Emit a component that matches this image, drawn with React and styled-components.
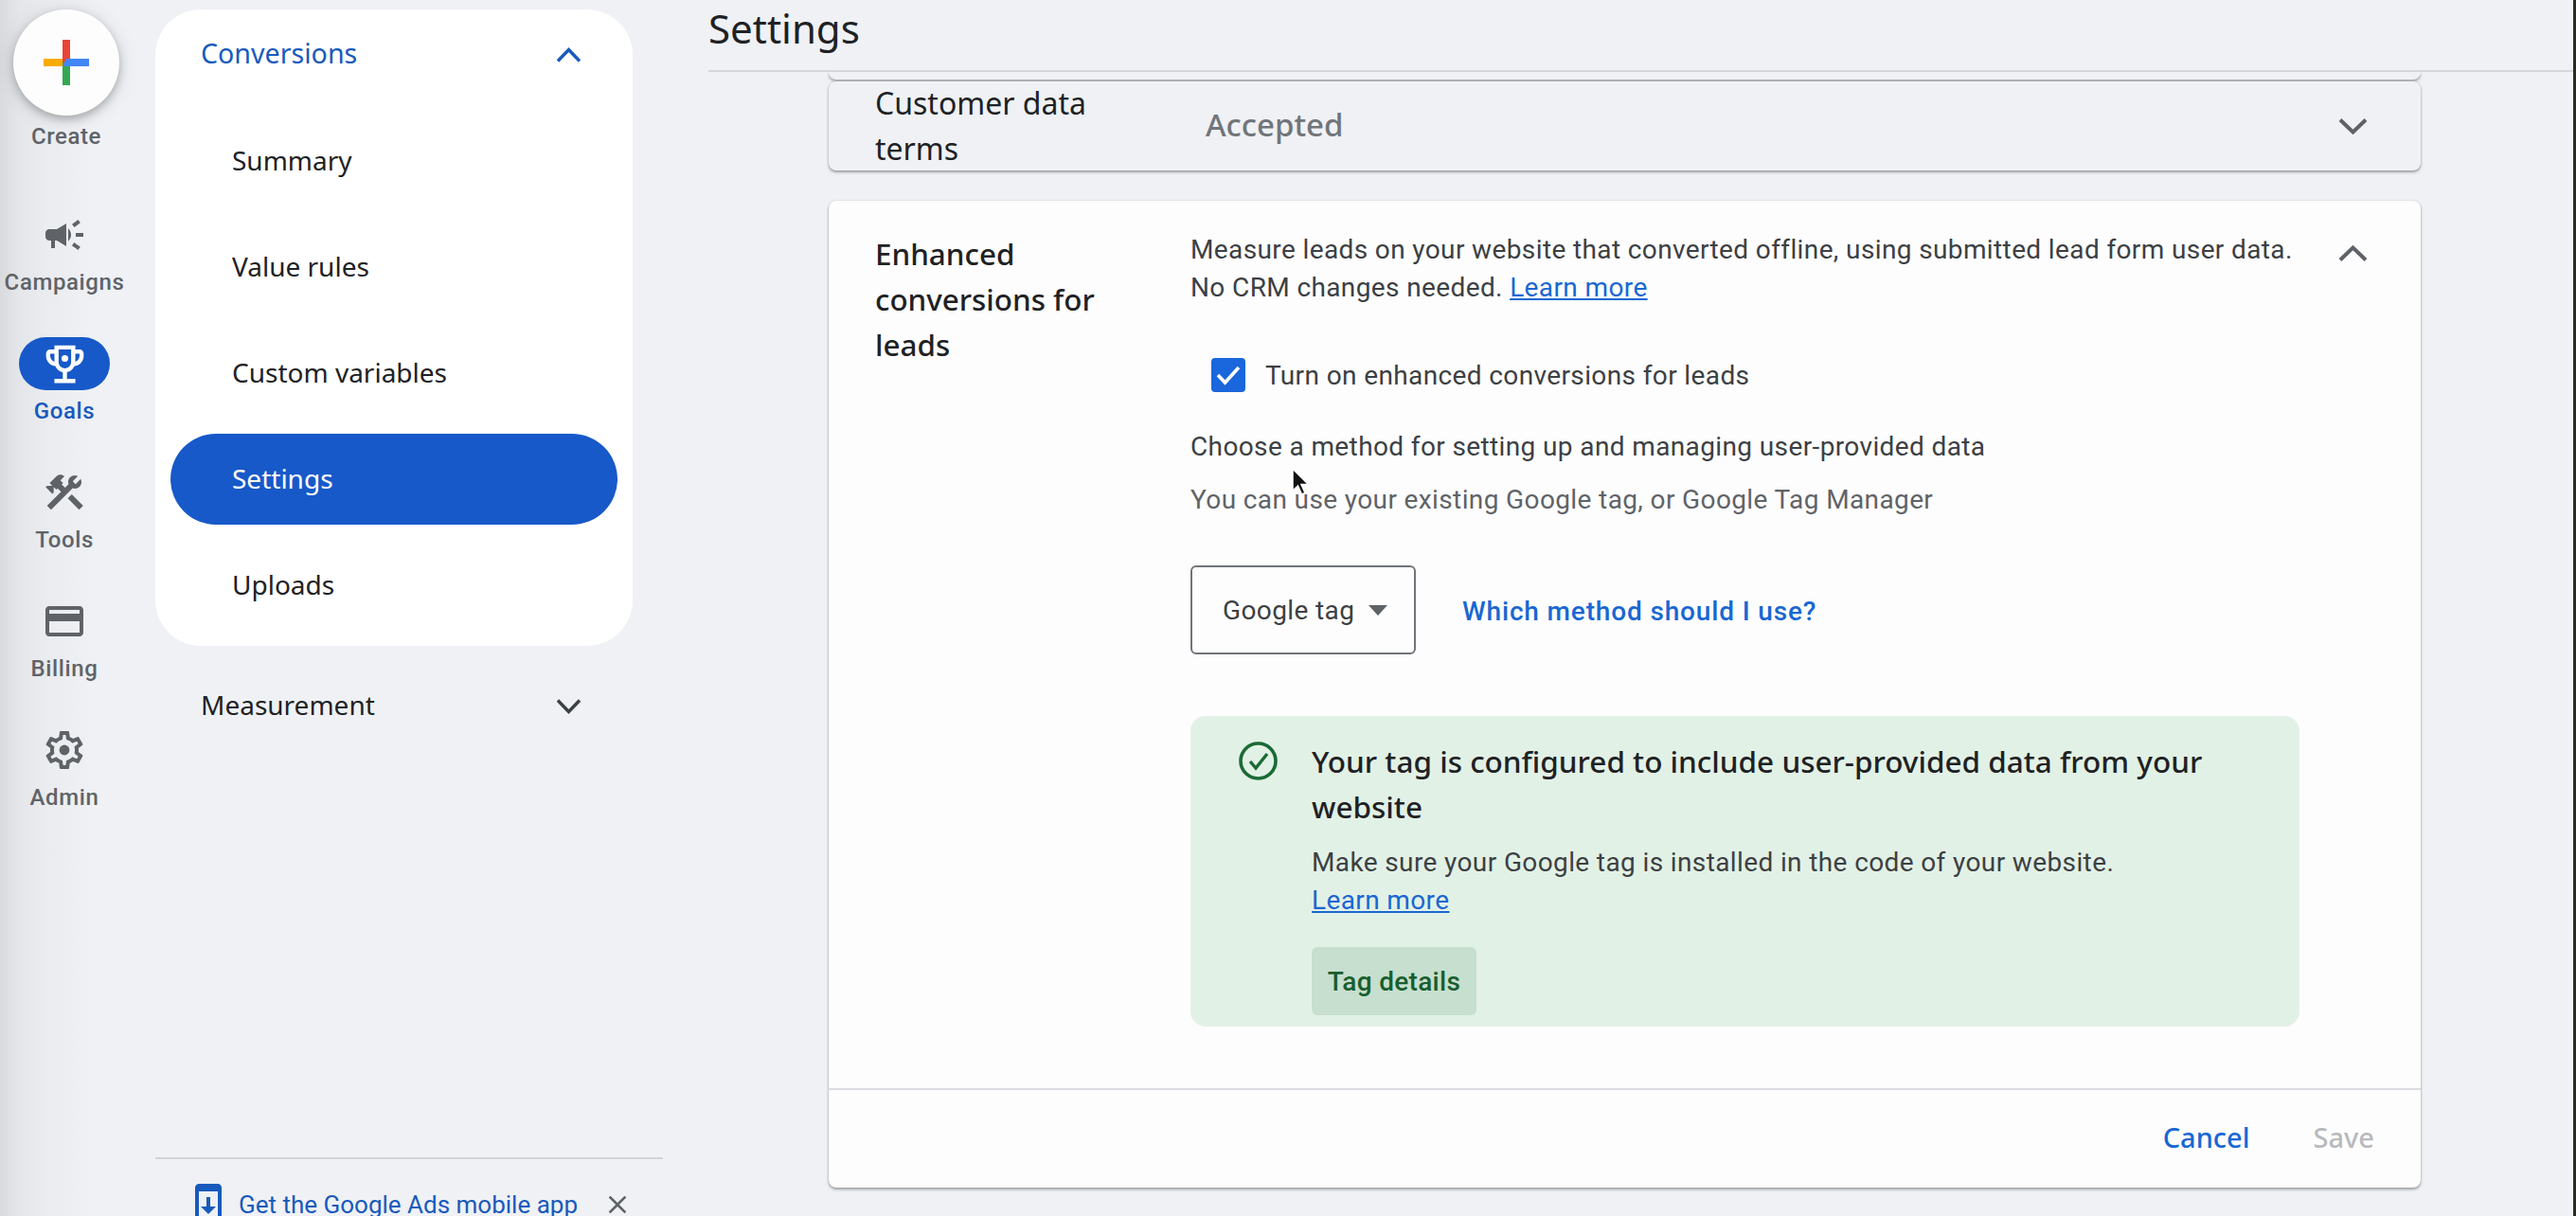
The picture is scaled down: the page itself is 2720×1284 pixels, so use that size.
import React from "react";
import styled, { createGlobalStyle } from "styled-components";

const DISPLAY = `"Noto Sans", Roboto, sans-serif`;
const BRAND = "#1759c9";

const Global = createGlobalStyle`
  html, body { margin: 0; padding: 0; background: #eff1f5; }
  * { box-sizing: border-box; }
  body { font-family: Roboto, "Noto Sans", sans-serif; color: #202124; }
`;

const Page = styled.div`
  position: relative;
  display: flex;
  width: 2720px;
  height: 1284px;
  overflow: hidden;
  border-right: 3px solid #2b2a20;
  background: linear-gradient(90deg, #d8dadd 0, #e4e6e9 20px, #eaecef 50px, #eff1f5 100px);
`;

const Rail = styled.nav`
  width: 164px;
  flex: none;
  display: flex;
  flex-direction: column;
  padding-top: 10px;
`;

const CreateButton = styled.div`
  width: 112px;
  height: 112px;
  margin-left: 14px;
  border-radius: 50%;
  background: #fdfdfd;
  box-shadow: 0 4px 10px rgba(60, 64, 67, 0.35), 0 2px 22px rgba(60, 64, 67, 0.12);
  display: flex;
  align-items: center;
  justify-content: center;
`;

const RailLabel = styled.div`
  height: 32px;
  line-height: 32px;
  margin-top: 6px;
  text-align: center;
  font-size: 24px;
  font-weight: 500;
  letter-spacing: 0.6px;
  color: ${(p) => (p.$active ? "#185abc" : "#5f6368")};
`;

const CreateBlock = styled.div`
  width: 140px;
  margin-bottom: 60px;
`;

const RailItem = styled.div`
  width: 136px;
  margin-bottom: 42px;
`;

const RailIcon = styled.div`
  width: 96px;
  height: 56px;
  margin: 0 auto;
  border-radius: 28px;
  display: flex;
  align-items: center;
  justify-content: center;
  background: ${(p) => (p.$active ? BRAND : "transparent")};
  color: ${(p) => (p.$active ? "#fff" : "#5f6368")};
`;

const NavColumn = styled.div`
  width: 536px;
  flex: none;
  display: flex;
  flex-direction: column;
  padding-top: 10px;
`;

const NavPanel = styled.div`
  width: 504px;
  background: #fff;
  border-radius: 48px;
  padding-bottom: 16px;
`;

const NavHeader = styled.div`
  width: 504px;
  height: 96px;
  display: flex;
  align-items: center;
  justify-content: space-between;
  padding: 0 54px 0 48px;
  font-family: ${DISPLAY};
  font-size: ${(p) => (p.$active ? 28.6 : 28)}px;
  line-height: 40px;
  color: ${(p) => (p.$active ? "#185abc" : "#202124")};
  margin-top: ${(p) => (p.$active ? 0 : "16px")};
`;

const NavHeaderText = styled.span`
  position: relative;
  top: -2px;
`;

const NavItem = styled.div`
  width: 472px;
  height: 96px;
  margin: 16px 0 0 16px;
  padding: 0 0 3px 65px;
  display: flex;
  align-items: center;
  border-radius: 48px;
  font-family: ${DISPLAY};
  font-size: 28px;
  line-height: 40px;
  color: ${(p) => (p.$active ? "#fff" : "#202124")};
  background: ${(p) => (p.$active ? BRAND : "transparent")};
`;

const NavFooter = styled.div`
  margin-top: auto;
  height: 62px;
  border-top: 2px solid #d0d2d6;
  padding: 24px 32px 0;
`;

const FooterRow = styled.div`
  display: flex;
  align-items: center;
  height: 48px;
  color: #185abc;
`;

const FooterText = styled.span`
  font-size: 26px;
  line-height: 24px;
  margin-left: 8px;
  flex: 1;
`;

const FooterClose = styled.span`
  display: flex;
  color: #5f6368;
`;

const Main = styled.main`
  flex: 1;
  min-width: 0;
  margin-left: 48px;
  display: flex;
  flex-direction: column;
`;

const PageHeader = styled.header`
  height: 76px;
  flex: none;
  border-bottom: 2px solid #d5d7da;
  font-family: ${DISPLAY};
  font-size: 42px;
  line-height: 60px;
  color: #202124;
`;

const Content = styled.div`
  padding-left: 127px;
  width: 1808px;
`;

const Sliver = styled.div`
  height: 8px;
  margin-bottom: 2px;
  border-radius: 0 0 8px 8px;
  background: #eff1f5;
  box-shadow: 0 2px 3px rgba(60, 64, 67, 0.45);
`;

const CollapsedCard = styled.section`
  height: 94px;
  display: flex;
  align-items: center;
  padding: 0 48px 0 49px;
  border-radius: 8px;
  background: #eff1f5;
  box-shadow: 0 2px 3px rgba(60, 64, 67, 0.45), 0 0 2px rgba(60, 64, 67, 0.2);
`;

const RowTitle = styled.div`
  width: 284px;
  flex: none;
  font-family: ${DISPLAY};
  font-size: ${(p) => (p.$strong ? 31.4 : 32)}px;
  line-height: 48px;
  font-weight: ${(p) => (p.$strong ? 500 : 400)};
  color: #202124;
  margin-right: ${(p) => p.$gap}px;
`;

const Accepted = styled.div`
  flex: 1;
  padding-bottom: 3px;
  font-family: ${DISPLAY};
  font-size: 33px;
  line-height: 44px;
  font-weight: 500;
  color: #70757a;
`;

const ChevronSlot = styled.div`
  width: 48px;
  height: 48px;
  flex: none;
  display: flex;
  align-items: center;
  justify-content: center;
  color: #5f6368;
  margin-top: ${(p) => p.$top || 0}px;
`;

const OpenCard = styled.section`
  margin-top: 32px;
  height: 1042px;
  border-radius: 8px;
  background: #fdfdfd;
  box-shadow: 0 2px 3px rgba(60, 64, 67, 0.45), 0 0 2px rgba(60, 64, 67, 0.2);
  display: flex;
  flex-direction: column;
`;

const CardBody = styled.div`
  flex: 1;
  display: flex;
  padding: 32px 48px 0 49px;
`;

const Column = styled.div`
  width: 1171px;
  flex: none;
  margin-right: 32px;
`;

const BodyText = styled.p`
  margin: ${(p) => p.$top || 0}px 0 0;
  font-size: 28px;
  line-height: 40px;
  letter-spacing: 0.38px;
  color: ${(p) => (p.$muted ? "#5f6368" : "#3c4043")};
`;

const TextLink = styled.a`
  color: #1967d2;
  text-decoration: underline;
`;

const CheckRow = styled.label`
  display: flex;
  align-items: center;
  gap: 21px;
  margin: 54px 0 0 22px;
  height: 36px;
  font-size: 28px;
  letter-spacing: 0.38px;
  color: #3c4043;
`;

const Checkbox = styled.span`
  width: 36px;
  height: 36px;
  border-radius: 4px;
  background: #1a66dc;
  display: flex;
  align-items: center;
  justify-content: center;
`;

const MethodRow = styled.div`
  display: flex;
  align-items: center;
  margin-top: 49px;
  gap: 49px;
`;

const Dropdown = styled.div`
  width: 238px;
  height: 94px;
  border: 2px solid #70757a;
  border-radius: 6px;
  padding-left: 32px;
  display: flex;
  align-items: center;
  gap: 15px;
  font-size: 28px;
  letter-spacing: 0.38px;
  color: #3c4043;
`;

const Caret = styled.span`
  width: 0;
  height: 0;
  border-left: 10px solid transparent;
  border-right: 10px solid transparent;
  border-top: 11px solid #5f6368;
`;

const ActionLink = styled.a`
  padding-top: 2px;
  font-size: 28px;
  letter-spacing: 0.85px;
  font-weight: 500;
  color: #1967d2;
`;

const Banner = styled.div`
  margin-top: 65px;
  height: 328px;
  border-radius: 16px;
  background: #e2f1e6;
  display: flex;
  padding: 24px 0 0 51px;
  gap: 36px;
`;

const BannerIcon = styled.div`
  margin-top: 3px;
  width: 41px;
  height: 41px;
  flex: none;
`;

const BannerTitle = styled.div`
  font-family: ${DISPLAY};
  font-size: 31.5px;
  line-height: 48px;
  font-weight: 500;
  color: #202124;
`;

const DetailsButton = styled.div`
  margin-top: 29px;
  width: 174px;
  height: 72px;
  border-radius: 6px;
  background: #c6dfcf;
  color: #185e2e;
  font-size: 28px;
  letter-spacing: 0.3px;
  font-weight: 500;
  display: flex;
  align-items: center;
  justify-content: center;
`;

const CardFooter = styled.div`
  height: 105px;
  flex: none;
  border-top: 2px solid #dadce0;
  display: flex;
  align-items: center;
  justify-content: flex-end;
  gap: 67px;
  padding: 0 49px 3px 0;
  font-family: ${DISPLAY};
  font-size: 29px;
  line-height: 40px;
  font-weight: 500;
`;

const FooterButton = styled.span`
  color: ${(p) => (p.$disabled ? "#b8babd" : "#1967d2")};
`;

const Pointer = styled.svg`
  position: absolute;
  left: 1363px;
  top: 493px;
`;

const Chevron = ({ up, w = 31, h = 17, color = "currentColor", weight = 4 }) => (
  <svg width={w} height={h} viewBox={`0 0 ${w} ${h}`} fill="none">
    <polyline
      points={up ? `2,${h - 1.5} ${w / 2},2.5 ${w - 2},${h - 1.5}` : `2,1.5 ${w / 2},${h - 2.5} ${w - 2},1.5`}
      stroke={color}
      strokeWidth={weight}
    />
  </svg>
);

const Mat = ({ size = 48, d, children }) => (
  <svg width={size} height={size} viewBox="0 0 24 24" fill="currentColor">
    {d && <path d={d} />}
    {children}
  </svg>
);

const icons = {
  campaign:
    "M18 11v2h4v-2h-4zm-2 6.61c.96.71 2.21 1.65 3.2 2.39.4-.53.8-1.07 1.2-1.6-.99-.74-2.24-1.68-3.2-2.4-.4.54-.8 1.08-1.2 1.61zM20.4 5.6c-.4-.53-.8-1.07-1.2-1.6-.99.74-2.24 1.68-3.2 2.4.4.53.8 1.07 1.2 1.6.96-.72 2.21-1.65 3.2-2.4zM4 9c-1.1 0-2 .9-2 2v2c0 1.1.9 2 2 2h1v4h2v-4h1l5 3V6L8 9H4zm11.5 3c0-1.33-.58-2.53-1.5-3.35v6.69c.92-.81 1.5-2.01 1.5-3.34z",
  trophy:
    "M19 5h-2V3H7v2H5c-1.1 0-2 .9-2 2v1c0 2.55 1.92 4.63 4.39 4.94.63 1.5 1.98 2.63 3.61 2.96V19H7v2h10v-2h-4v-3.1c1.63-.33 2.98-1.46 3.61-2.96C19.08 12.63 21 10.55 21 8V7c0-1.1-.9-2-2-2zM5 8V7h2v3.82C5.84 10.4 5 9.3 5 8zm7 6c-1.65 0-3-1.35-3-3V5h6v6c0 1.65-1.35 3-3 3zm7-6c0 1.3-.84 2.4-2 2.82V7h2v1z",
  tools:
    "M13.783 15.172l2.121-2.121 5.996 5.996-2.121 2.121zM17.5 10c1.93 0 3.5-1.57 3.5-3.5 0-.58-.16-1.12-.41-1.6l-2.7 2.7-1.49-1.49 2.7-2.7c-.48-.25-1.02-.41-1.6-.41C15.57 3 14 4.57 14 6.5c0 .41.08.8.21 1.16l-1.85 1.85-1.78-1.78.71-.71-1.41-1.41L12 3.49c-1.17-1.17-3.07-1.17-4.24 0L4.22 7.03l1.41 1.41H2.81l-.71.71 3.54 3.54.71-.71V9.15l1.41 1.41.71-.71 1.78 1.78-7.41 7.41 2.12 2.12L16.34 9.79c.36.13.75.21 1.16.21z",
  card:
    "M20 4H4c-1.11 0-1.99.89-1.99 2L2 18c0 1.11.89 2 2 2h16c1.11 0 2-.89 2-2V6c0-1.11-.89-2-2-2zm0 14H4v-6h16v6zm0-10H4V6h16v2z",
  gear:
    "M19.43 12.98c.04-.32.07-.64.07-.98 0-.34-.03-.66-.07-.98l2.11-1.65c.19-.15.24-.42.12-.64l-2-3.46c-.09-.16-.26-.25-.44-.25-.06 0-.12.01-.17.03l-2.49 1c-.52-.4-1.08-.73-1.69-.98l-.38-2.65C14.46 2.18 14.25 2 14 2h-4c-.25 0-.46.18-.49.42l-.38 2.65c-.61.25-1.17.59-1.69.98l-2.49-1c-.06-.02-.12-.03-.18-.03-.17 0-.34.09-.43.25l-2 3.46c-.13.22-.07.49.12.64l2.11 1.65c-.04.32-.07.65-.07.98 0 .33.03.66.07.98l-2.11 1.65c-.19.15-.24.42-.12.64l2 3.46c.09.16.26.25.44.25.06 0 .12-.01.17-.03l2.49-1c.52.4 1.08.73 1.69.98l.38 2.65c.03.24.24.42.49.42h4c.25 0 .46-.18.49-.42l.38-2.65c.61-.25 1.17-.59 1.69-.98l2.49 1c.06.02.12.03.18.03.17 0 .34-.09.43-.25l2-3.46c.12-.22.07-.49-.12-.64l-2.11-1.65zm-1.98-1.71c.04.31.05.52.05.73 0 .21-.02.43-.05.73l-.14 1.13.89.7 1.08.84-.7 1.21-1.27-.51-1.04-.42-.9.68c-.43.32-.84.56-1.25.73l-1.06.43-.16 1.13-.2 1.35h-1.4l-.19-1.35-.16-1.13-1.06-.43c-.43-.18-.83-.41-1.23-.71l-.91-.7-1.06.43-1.27.51-.7-1.21 1.08-.84.89-.7-.14-1.13c-.03-.31-.05-.54-.05-.74s.02-.43.05-.73l.14-1.13-.89-.7-1.08-.84.7-1.21 1.27.51 1.04.42.9-.68c.43-.32.84-.56 1.25-.73l1.06-.43.16-1.13.2-1.35h1.39l.19 1.35.16 1.13 1.06.43c.43.18.83.41 1.23.71l.91.7 1.06-.43 1.27-.51.7 1.21-1.07.85-.89.7.14 1.13z",
  phone:
    "M17 1.01L7 1c-1.1 0-2 .9-2 2v18c0 1.1.9 2 2 2h10c1.1 0 2-.9 2-2V3c0-1.1-.9-1.99-2-1.99zM17 19H7V5h10v14zm-1-6h-3V8h-2v5H8l4 4 4-4z",
  close:
    "M19 6.41L17.59 5 12 10.59 6.41 5 5 6.41 10.59 12 5 17.59 6.41 19 12 13.41 17.59 19 19 17.59 13.41 12z",
};

const railItems = [
  { label: "Campaigns", icon: <Mat d={icons.campaign} /> },
  {
    label: "Goals",
    active: true,
    icon: (
      <Mat size={53} d={icons.trophy}>
        <circle cx="12" cy="9.3" r="1.6" />
      </Mat>
    ),
  },
  { label: "Tools", icon: <Mat d={icons.tools} /> },
  { label: "Billing", icon: <Mat d={icons.card} /> },
  {
    label: "Admin",
    icon: (
      <Mat d={icons.gear}>
        <circle cx="12" cy="12" r="2.7" />
      </Mat>
    ),
  },
];

const navItems = ["Summary", "Value rules", "Custom variables", "Settings", "Uploads"];

export default function App() {
  return (
    <Page>
      <Global />
      <Rail>
        <CreateBlock>
          <CreateButton>
            <svg width="48" height="48" viewBox="0 0 48 48">
              <rect x="0" y="20" width="24" height="8" fill="#f9ab00" />
              <rect x="20" y="24" width="8" height="24" fill="#34a853" />
              <rect x="20" y="0" width="8" height="24" fill="#ea4335" />
              <polygon points="24,20 48,20 48,28 20,28" fill="#4285f4" />
            </svg>
          </CreateButton>
          <RailLabel>Create</RailLabel>
        </CreateBlock>
        {railItems.map((item) => (
          <RailItem key={item.label}>
            <RailIcon $active={item.active}>{item.icon}</RailIcon>
            <RailLabel $active={item.active}>{item.label}</RailLabel>
          </RailItem>
        ))}
      </Rail>

      <NavColumn>
        <NavPanel>
          <NavHeader $active>
            <NavHeaderText>Conversions</NavHeaderText>
            <Chevron up w={27} h={16} weight={3.4} />
          </NavHeader>
          {navItems.map((label) => (
            <NavItem key={label} $active={label === "Settings"}>
              {label}
            </NavItem>
          ))}
        </NavPanel>
        <NavHeader>
          <NavHeaderText>Measurement</NavHeaderText>
          <Chevron w={27} h={16} color="#3c4043" weight={3.4} />
        </NavHeader>
        <NavFooter>
          <FooterRow>
            <Mat d={icons.phone} />
            <FooterText>Get the Google Ads mobile app</FooterText>
            <FooterClose>
              <Mat size={32} d={icons.close} />
            </FooterClose>
          </FooterRow>
        </NavFooter>
      </NavColumn>

      <Main>
        <PageHeader>Settings</PageHeader>
        <Content>
          <Sliver />
          <CollapsedCard>
            <RowTitle $gap={65}>Customer data terms</RowTitle>
            <Accepted>Accepted</Accepted>
            <ChevronSlot>
              <Chevron />
            </ChevronSlot>
          </CollapsedCard>
          <OpenCard>
            <CardBody>
              <RowTitle $strong $gap={49}>
                Enhanced conversions for leads
              </RowTitle>
              <Column>
                <BodyText>
                  Measure leads on your website that converted offline, using submitted lead form user data.
                  <br />
                  No CRM changes needed. <TextLink>Learn more</TextLink>
                </BodyText>
                <CheckRow>
                  <Checkbox>
                    <svg width="26" height="22" viewBox="0 0 26 22" fill="none">
                      <polyline points="2,11 9.5,19 24,3" stroke="#fff" strokeWidth="3.6" />
                    </svg>
                  </Checkbox>
                  Turn on enhanced conversions for leads
                </CheckRow>
                <BodyText $top={38}>Choose a method for setting up and managing user-provided data</BodyText>
                <BodyText $top={16} $muted>
                  You can use your existing Google tag, or Google Tag Manager
                </BodyText>
                <MethodRow>
                  <Dropdown>
                    Google tag
                    <Caret />
                  </Dropdown>
                  <ActionLink>Which method should I use?</ActionLink>
                </MethodRow>
                <Banner>
                  <BannerIcon>
                    <svg width="41" height="41" viewBox="0 0 41 41" fill="none">
                      <circle cx="20.5" cy="20.5" r="18.5" stroke="#1a6b35" strokeWidth="3.6" />
                      <polyline points="12,21 18,28 30,13" stroke="#1a6b35" strokeWidth="3.4" />
                    </svg>
                  </BannerIcon>
                  <div>
                    <BannerTitle>
                      Your tag is configured to include user-provided data from your
                      <br />
                      website
                    </BannerTitle>
                    <BodyText $top={15}>
                      Make sure your Google tag is installed in the code of your website.
                      <br />
                      <TextLink>Learn more</TextLink>
                    </BodyText>
                    <DetailsButton>Tag details</DetailsButton>
                  </div>
                </Banner>
              </Column>
              <ChevronSlot $top={-1}>
                <Chevron up />
              </ChevronSlot>
            </CardBody>
            <CardFooter>
              <FooterButton>Cancel</FooterButton>
              <FooterButton $disabled>Save</FooterButton>
            </CardFooter>
          </OpenCard>
        </Content>
      </Main>

      <Pointer width="21" height="31" viewBox="0 0 21 31">
        <path d="M2 2 L2 25 L7.5 20 L11.5 29 L15 27.5 L11 18.5 L18.5 18.5 Z" fill="#111" stroke="#fff" strokeWidth="1.5" />
      </Pointer>
    </Page>
  );
}
